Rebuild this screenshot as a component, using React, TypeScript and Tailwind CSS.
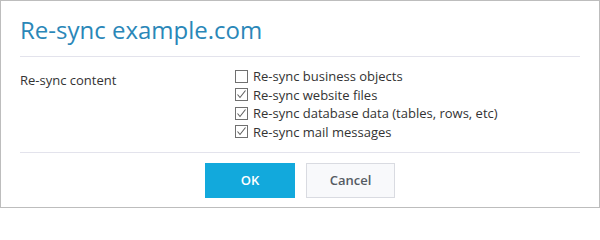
import React from "react";

interface SyncOption {
  id: string;
  label: string;
  checked: boolean;
}

const options: SyncOption[] = [
  { id: "objects", label: "Re-sync business objects", checked: false },
  { id: "files", label: "Re-sync website files", checked: true },
  { id: "db", label: "Re-sync database data (tables, rows, etc)", checked: true },
  { id: "mail", label: "Re-sync mail messages", checked: true },
];

const Box: React.FC<{ checked: boolean }> = ({ checked }) => (
  <span className="w-[13px] h-[13px] border border-[#707070] bg-white flex items-center justify-center shrink-0">
    {checked && (
      <svg width="11" height="11" viewBox="0 0 11 11">
        <path d="M1.5 5.5 L4 8.5 L9.5 1.5" fill="none" stroke="#606060" strokeWidth="1.1" />
      </svg>
    )}
  </span>
);

export default function App() {
  return (
    <div
      className="w-[600px] h-[208px] border border-[#bdbdbd] bg-white px-[19px] flex flex-col text-[13px] text-[#333]"
      style={{ fontFamily: '"Open Sans", "Liberation Sans", sans-serif' }}
    >
      <h1 className="pt-[13px] pb-[10px] text-[24px] leading-[32px] text-[#2a87b8] border-b border-[#e3e3ec]">
        Re-sync example.com
      </h1>

      <div className="flex pt-[10px] pb-[11px] border-b border-[#e3e3ec]">
        <div className="w-[215px] pt-[4px] leading-[18px]">Re-sync content</div>
        <div className="flex flex-col">
          {options.map((o) => (
            <label key={o.id} className="flex items-center gap-[5px] leading-[18.5px] h-[18.5px]">
              <Box checked={o.checked} />
              <span>{o.label}</span>
            </label>
          ))}
        </div>
      </div>

      <div className="flex justify-center gap-[11px] pt-[10px]">
        <button className="w-[90px] h-[35px] bg-[#12a9dc] text-white font-semibold">OK</button>
        <button className="w-[89px] h-[35px] bg-[#f8f9fb] border border-[#d9dbe1] text-[#555b63] font-semibold">
          Cancel
        </button>
      </div>
    </div>
  );
}
